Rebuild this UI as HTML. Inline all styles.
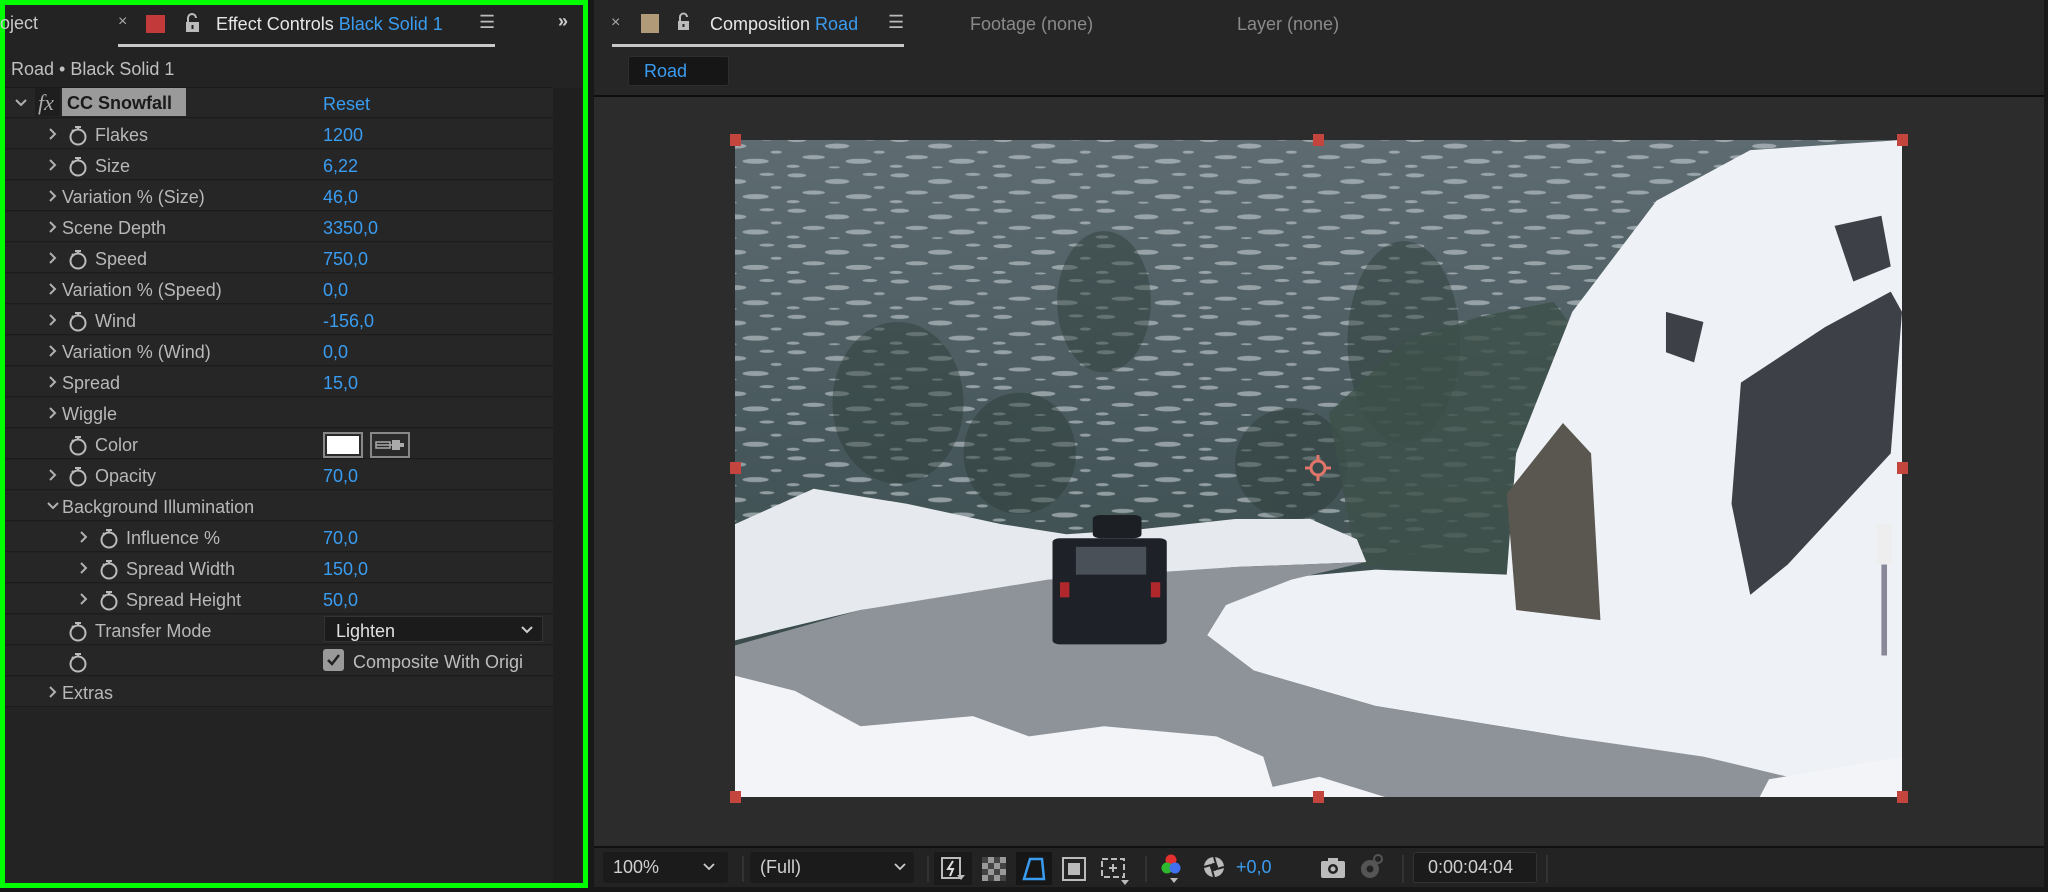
<!DOCTYPE html>
<html><head><meta charset="utf-8"><style>
*{margin:0;padding:0;box-sizing:border-box}
body{width:2048px;height:892px;background:#181818;font-family:"Liberation Sans",sans-serif;position:relative;overflow:hidden;color:#b4b4b4}
.a{position:absolute}
.t{font-size:18px;white-space:nowrap;line-height:1}
.blue{color:#3a9cf0}
.row{position:absolute;left:5px;width:548px;height:30px;background:#262626;border-bottom:1px solid #1c1c1c}
.row span{position:absolute;top:6px;font-size:18px;white-space:nowrap}
.row svg.c{position:absolute;top:8px}
.val{left:318px;color:#3a9cf0}
svg.sw{position:absolute;top:5px}
</style></head><body>
<div class="a" style="left:0;top:0;width:588px;height:888px;background:#232323;border:5px solid #00ff00"></div>
<div class="a t" style="left:0;top:14px;color:#c8c8c8">oject</div>
<div class="a t" style="left:118px;top:14px;color:#aaa;font-size:16px">×</div>
<div class="a" style="left:146px;top:15px;width:19px;height:18px;background:#c23a3a"></div>
<svg class="a" style="left:184px;top:12px" width="18" height="22"><path d="M4 10V6a4 4 0 0 1 8 0" stroke="#bbb" stroke-width="2" fill="none"/><rect x="2" y="10" width="13" height="10" fill="#bbb"/><rect x="7.5" y="13" width="2" height="4" fill="#232323"/></svg>
<div class="a t" style="left:216px;top:15px;color:#e6e6e6">Effect Controls <span class="blue">Black Solid 1</span></div>
<div class="a t" style="left:479px;top:13px;color:#bbb">☰</div>
<div class="a" style="left:118px;top:44px;width:377px;height:3px;background:#c8c8c8"></div>
<div class="a t" style="left:558px;top:12px;color:#ccc;font-weight:bold">»</div>
<div class="a t" style="left:11px;top:60px;color:#c0c0c0">Road • Black Solid 1</div>
<div class="a" style="left:5px;top:87px;width:548px;height:1px;background:#1a1a1a"></div>
<div class="a" style="left:553px;top:88px;width:29px;height:795px;background:#1f1f1f"></div>

<div class="row" style="top:88px"><svg class="c" style="left:9px;top:9px" width="14" height="12"><path d="M2 3l5 5 5-5" stroke="#b0b0b0" stroke-width="2" fill="none"/></svg><span style="left:30px;top:0;width:25px;height:28px;background:#1e1e1e;color:#aaa;font-style:italic;font-family:'Liberation Serif',serif;font-size:22px;padding-left:3px;padding-top:2px">fx</span><span style="left:57px;top:0;height:28px;width:124px;background:#9a9a9a;color:#1a1a1a;padding:5px 0 0 5px;font-weight:bold">CC Snowfall</span><span class="val">Reset</span></div>

<div id="rows"></div>
<script>
var R=[
[0,1,1,"Flakes","1200"],[0,1,1,"Size","6,22"],[0,1,0,"Variation % (Size)","46,0"],[0,1,0,"Scene Depth","3350,0"],
[0,1,1,"Speed","750,0"],[0,1,0,"Variation % (Speed)","0,0"],[0,1,1,"Wind","-156,0"],[0,1,0,"Variation % (Wind)","0,0"],
[0,1,0,"Spread","15,0"],[0,1,0,"Wiggle",""],[0,0,1,"Color","C"],[0,1,1,"Opacity","70,0"],[0,2,0,"Background Illumination",""],
[1,1,1,"Influence %","70,0"],[1,1,1,"Spread Width","150,0"],[1,1,1,"Spread Height","50,0"],[0,0,1,"Transfer Mode","D"],[0,0,1,"","K"],[0,1,0,"Extras",""]];
var h="";
R.forEach(function(r,i){
 var top=119+31*i, ind=r[0]*31, x=43+ind;
 h+='<div class="row" style="top:'+top+'px">';
 if(r[1]==1)h+='<svg class="c" style="left:'+x+'px" width="10" height="14"><path d="M2 2l5 5-5 5" stroke="#b0b0b0" stroke-width="2" fill="none"/></svg>';
 if(r[1]==2)h+='<svg class="c" style="left:'+(x-2)+'px;top:9px" width="14" height="12"><path d="M2 3l5 5 5-5" stroke="#b0b0b0" stroke-width="2" fill="none"/></svg>';
 var lx=x+14;
 if(r[2]){h+='<svg class="sw" style="left:'+(x+19)+'px" width="22" height="22"><circle cx="11" cy="13" r="7.5" stroke="#bbb" stroke-width="2" fill="none"/><path d="M8 3h6M11 3v3M5 6l2 2" stroke="#bbb" stroke-width="2" fill="none"/></svg>';lx=x+47;}
 h+='<span style="left:'+lx+'px;color:#b8b8b8">'+r[3]+'</span>';
 var v=r[4];
 if(v=="C")h+='<span style="left:318px;top:3px;width:40px;height:26px;border:2px solid #888;background:#fff;outline:2px solid #2a2a2a;outline-offset:-4px"></span><span style="left:365px;top:3px;width:40px;height:26px;border:2px solid #888;background:#2a2a2a"><svg width="36" height="22"><path d="M4 11h16M4 8h14v6H4z" stroke="#aaa" fill="none" stroke-width="1.5"/><rect x="20" y="6" width="8" height="10" fill="#aaa"/><rect x="28" y="9" width="4" height="4" fill="#aaa"/></svg></span>';
 else if(v=="D")h+='<span style="left:319px;top:1px;width:219px;height:26px;background:#1b1b1b;border:1px solid #333;color:#e0e0e0;padding:4px 0 0 11px">Lighten<svg style="position:absolute;right:8px;top:8px" width="14" height="10"><path d="M2 2l5 5 5-5" stroke="#ccc" stroke-width="2" fill="none"/></svg></span>';
 else if(v=="K")h+='<span style="left:318px;top:3px;width:21px;height:22px;background:#9a9a9a;border-radius:3px"><svg width="21" height="22"><path d="M5 11l4 4 7-9" stroke="#222" stroke-width="2.5" fill="none"/></svg></span><span style="left:348px;color:#bdbdbd">Composite With Origi</span>';
 else if(v)h+='<span class="val">'+v+'</span>';
 h+='</div>';
});
document.getElementById("rows").innerHTML=h;
</script>

<div class="a" style="left:594px;top:0;width:1450px;height:95px;background:#262626"></div>
<div class="a t" style="left:611px;top:15px;color:#aaa;font-size:16px">×</div>
<div class="a" style="left:641px;top:14px;width:18px;height:19px;background:#b09a78"></div>
<svg class="a" style="left:676px;top:12px" width="16" height="20"><path d="M4 9V5a3.5 3.5 0 0 1 7 0" stroke="#bbb" stroke-width="2" fill="none"/><rect x="2" y="9" width="11" height="9" fill="#bbb"/><rect x="6.5" y="12" width="2" height="3" fill="#262626"/></svg>
<div class="a t" style="left:710px;top:15px;color:#e6e6e6">Composition <span class="blue">Road</span></div>
<div class="a t" style="left:888px;top:13px;color:#bbb">☰</div>
<div class="a" style="left:612px;top:44px;width:292px;height:3px;background:#c8c8c8"></div>
<div class="a t" style="left:970px;top:15px;color:#8a8a8a">Footage (none)</div>
<div class="a t" style="left:1237px;top:15px;color:#8a8a8a">Layer (none)</div>
<div class="a" style="left:628px;top:56px;width:101px;height:30px;background:#161616;border-radius:3px;border:1px solid #2e2e2e"></div>
<div class="a t" style="left:644px;top:62px;color:#3a9cf0">Road</div>
<div class="a" style="left:594px;top:95px;width:1450px;height:2px;background:#0e0e0e"></div>
<div class="a" style="left:594px;top:97px;width:1450px;height:749px;background:#2c2c2c"></div>

<svg class="a" style="left:735px;top:140px" width="1167" height="657" viewBox="166 80 1246 1300" preserveAspectRatio="none">
<defs>
<linearGradient id="tr" x1="0" y1="0" x2="0" y2="1"><stop offset="0" stop-color="#5e6c72"/><stop offset=".5" stop-color="#45565a"/><stop offset="1" stop-color="#33433f"/></linearGradient>
<pattern id="fr" width="110" height="70" patternUnits="userSpaceOnUse">
<g fill="#c4cdd2" opacity=".6">
<ellipse cx="12" cy="10" rx="10" ry="4"/><ellipse cx="55" cy="22" rx="13" ry="5"/><ellipse cx="90" cy="8" rx="8" ry="3"/><ellipse cx="30" cy="44" rx="12" ry="4"/><ellipse cx="78" cy="52" rx="14" ry="5"/><ellipse cx="100" cy="34" rx="6" ry="3"/><ellipse cx="8" cy="62" rx="7" ry="3"/><ellipse cx="52" cy="64" rx="6" ry="2"/>
</g>
</pattern>
</defs>
<rect x="166" y="80" width="1246" height="1300" fill="url(#tr)"/>
<rect x="166" y="80" width="1246" height="820" fill="url(#fr)"/>
<g fill="#2c3b37" opacity=".45"><ellipse cx="340" cy="600" rx="70" ry="160"/><ellipse cx="470" cy="700" rx="60" ry="120"/><ellipse cx="760" cy="720" rx="60" ry="110"/><ellipse cx="880" cy="480" rx="60" ry="200"/><ellipse cx="560" cy="400" rx="50" ry="140"/></g>
<polygon fill="#3d5048" opacity=".8" points="800,620 880,480 960,430 1040,400 1060,450 1000,700 990,950 830,920"/>
<polygon fill="#e6eaee" points="166,840 250,770 350,800 450,840 520,860 600,850 700,830 780,830 830,870 840,915 700,925 500,960 300,1010 166,1070"/>
<polygon fill="#eef1f5" points="690,1000 760,945 850,930 990,940 1000,700 1060,420 1150,200 1250,100 1412,80 1412,1380 1290,1380 1290,1340 1050,1260 850,1200 720,1130 670,1060"/>
<polygon fill="#5a5650" points="990,780 1050,640 1080,700 1090,1030 1000,1010"/>
<polygon fill="#3d4147" points="1160,420 1200,440 1190,520 1160,500"/>
<polygon fill="#3d4147" points="1240,560 1330,450 1400,380 1412,420 1400,700 1290,920 1250,980 1230,800"/>
<polygon fill="#3d4147" points="1340,250 1390,230 1400,330 1360,360"/>
<polygon fill="#8e939a" points="166,1080 300,1010 500,950 700,925 840,915 760,950 690,1000 670,1060 720,1130 850,1200 1050,1260 1200,1300 1290,1340 1290,1380 166,1380"/>
<polygon fill="#f2f4f7" points="166,1140 230,1170 300,1240 420,1220 480,1260 560,1240 680,1260 730,1300 740,1360 790,1340 860,1380 166,1380"/>
<polygon fill="#f2f4f7" points="1270,1345 1412,1300 1412,1380 1260,1380"/>
<rect x="548" y="822" width="52" height="46" rx="8" fill="#1c1f24"/>
<rect x="505" y="868" width="122" height="210" rx="8" fill="#1e2228"/>
<rect x="530" y="885" width="75" height="55" fill="#4a5058"/>
<rect x="513" y="955" width="10" height="30" fill="#b0282c"/><rect x="610" y="955" width="10" height="30" fill="#b0282c"/>
<rect x="1385" y="840" width="16" height="80" fill="#eee"/><rect x="1390" y="920" width="6" height="180" fill="#889"/>
</svg>
<div id="hd"></div>
<script>
var s="";[735,1318,1902].forEach(function(x){[140,468,797].forEach(function(y){if(x==1318&&y==468)return;s+='<div class="a" style="left:'+(x-5)+'px;top:'+(y-6)+'px;width:11px;height:12px;background:#c4453e"></div>';});});
document.getElementById("hd").innerHTML=s;
</script>
<svg class="a" style="left:1304px;top:454px" width="28" height="28"><circle cx="14" cy="14" r="7" stroke="#e0756a" stroke-width="3" fill="none"/><path d="M14 1v7M14 20v7M1 14h7M20 14h7" stroke="#e0756a" stroke-width="3"/></svg>

<div class="a" style="left:594px;top:846px;width:1450px;height:41px;background:#232323;border-top:2px solid #111"></div>
<div class="a" style="left:603px;top:852px;width:125px;height:31px;background:#1b1b1b;border-radius:3px"></div>
<div class="a t" style="left:613px;top:858px;color:#d0d0d0">100%</div>
<svg class="a" style="left:702px;top:862px" width="14" height="10"><path d="M2 2l5 5 5-5" stroke="#ccc" stroke-width="1.8" fill="none"/></svg>
<div class="a" style="left:750px;top:852px;width:164px;height:31px;background:#1b1b1b;border-radius:3px"></div>
<div class="a t" style="left:760px;top:858px;color:#d0d0d0">(Full)</div>
<svg class="a" style="left:893px;top:862px" width="14" height="10"><path d="M2 2l5 5 5-5" stroke="#ccc" stroke-width="1.8" fill="none"/></svg>
<div class="a" style="left:934px;top:852px;width:38px;height:33px;background:#1a1a1a"></div>
<svg class="a" style="left:940px;top:856px" width="26" height="26"><rect x="2" y="2" width="18" height="20" stroke="#bbb" stroke-width="2" fill="none"/><path d="M13 5l-5 8h5l-3 7" stroke="#ddd" stroke-width="2" fill="none"/><path d="M17 19h8l-4 5z" fill="#bbb"/></svg>
<svg class="a" style="left:982px;top:857px" width="24" height="24"><rect width="24" height="24" fill="#999"/><g fill="#444"><rect x="0" y="0" width="6" height="6"/><rect x="12" y="0" width="6" height="6"/><rect x="6" y="6" width="6" height="6"/><rect x="18" y="6" width="6" height="6"/><rect x="0" y="12" width="6" height="6"/><rect x="12" y="12" width="6" height="6"/><rect x="6" y="18" width="6" height="6"/><rect x="18" y="18" width="6" height="6"/></g></svg>
<div class="a" style="left:1016px;top:852px;width:36px;height:33px;background:#161616"></div>
<svg class="a" style="left:1020px;top:856px" width="28" height="26"><path d="M10 3h12l2 20H4z" stroke="#3a9cf0" stroke-width="2.5" fill="none"/></svg>
<svg class="a" style="left:1061px;top:856px" width="26" height="26"><rect x="2" y="2" width="22" height="22" stroke="#bbb" stroke-width="2" fill="none"/><rect x="7" y="7" width="12" height="12" fill="#bbb"/></svg>
<svg class="a" style="left:1099px;top:854px" width="32" height="32"><path d="M3 5h22v18H3z" stroke="#bbb" stroke-width="2" fill="none" stroke-dasharray="6 3"/><path d="M14 10v8M10 14h8" stroke="#bbb" stroke-width="2"/><path d="M22 26h8l-4 5z" fill="#bbb"/></svg>
<svg class="a" style="left:1160px;top:853px" width="28" height="32"><circle cx="11" cy="7" r="5.5" fill="#e53030"/><circle cx="7" cy="15" r="5.5" fill="#2eb82e"/><circle cx="15" cy="15" r="5.5" fill="#4070f0"/><path d="M10 25h8l-4 5z" fill="#bbb"/></svg>
<svg class="a" style="left:1202px;top:855px" width="24" height="24"><circle cx="12" cy="12" r="10" fill="#bbb"/><circle cx="12" cy="12" r="4" fill="#232323"/><path d="M12 2l2 7M22 12l-7 2M12 22l-2-7M2 12l7-2" stroke="#232323" stroke-width="2"/></svg>
<div class="a t" style="left:1236px;top:858px;color:#3a9cf0">+0,0</div>
<svg class="a" style="left:1320px;top:856px" width="26" height="24"><rect x="1" y="5" width="24" height="17" rx="2" fill="#bbb"/><rect x="8" y="2" width="10" height="5" fill="#bbb"/><circle cx="13" cy="13" r="5" fill="#232323"/><circle cx="13" cy="13" r="2.5" fill="#bbb"/></svg>
<svg class="a" style="left:1358px;top:853px" width="28" height="28"><circle cx="12" cy="16" r="9" fill="#555"/><circle cx="12" cy="16" r="3.5" fill="#232323"/><circle cx="20" cy="6" r="4" stroke="#555" stroke-width="2" fill="none"/></svg>
<div class="a" style="left:1402px;top:855px;width:2px;height:28px;background:#333"></div>
<div class="a" style="left:1413px;top:852px;width:124px;height:31px;background:#1b1b1b;border:1px solid #333;border-radius:3px"></div>
<div class="a t" style="left:1428px;top:858px;color:#d0d0d0">0:00:04:04</div>
<div class="a" style="left:1546px;top:855px;width:2px;height:28px;background:#333"></div>
<div class="a" style="left:927px;top:856px;width:2px;height:26px;background:#333"></div>
<div class="a" style="left:1145px;top:856px;width:2px;height:26px;background:#333"></div>
<div class="a" style="left:742px;top:856px;width:2px;height:26px;background:#333"></div>
</body></html>
